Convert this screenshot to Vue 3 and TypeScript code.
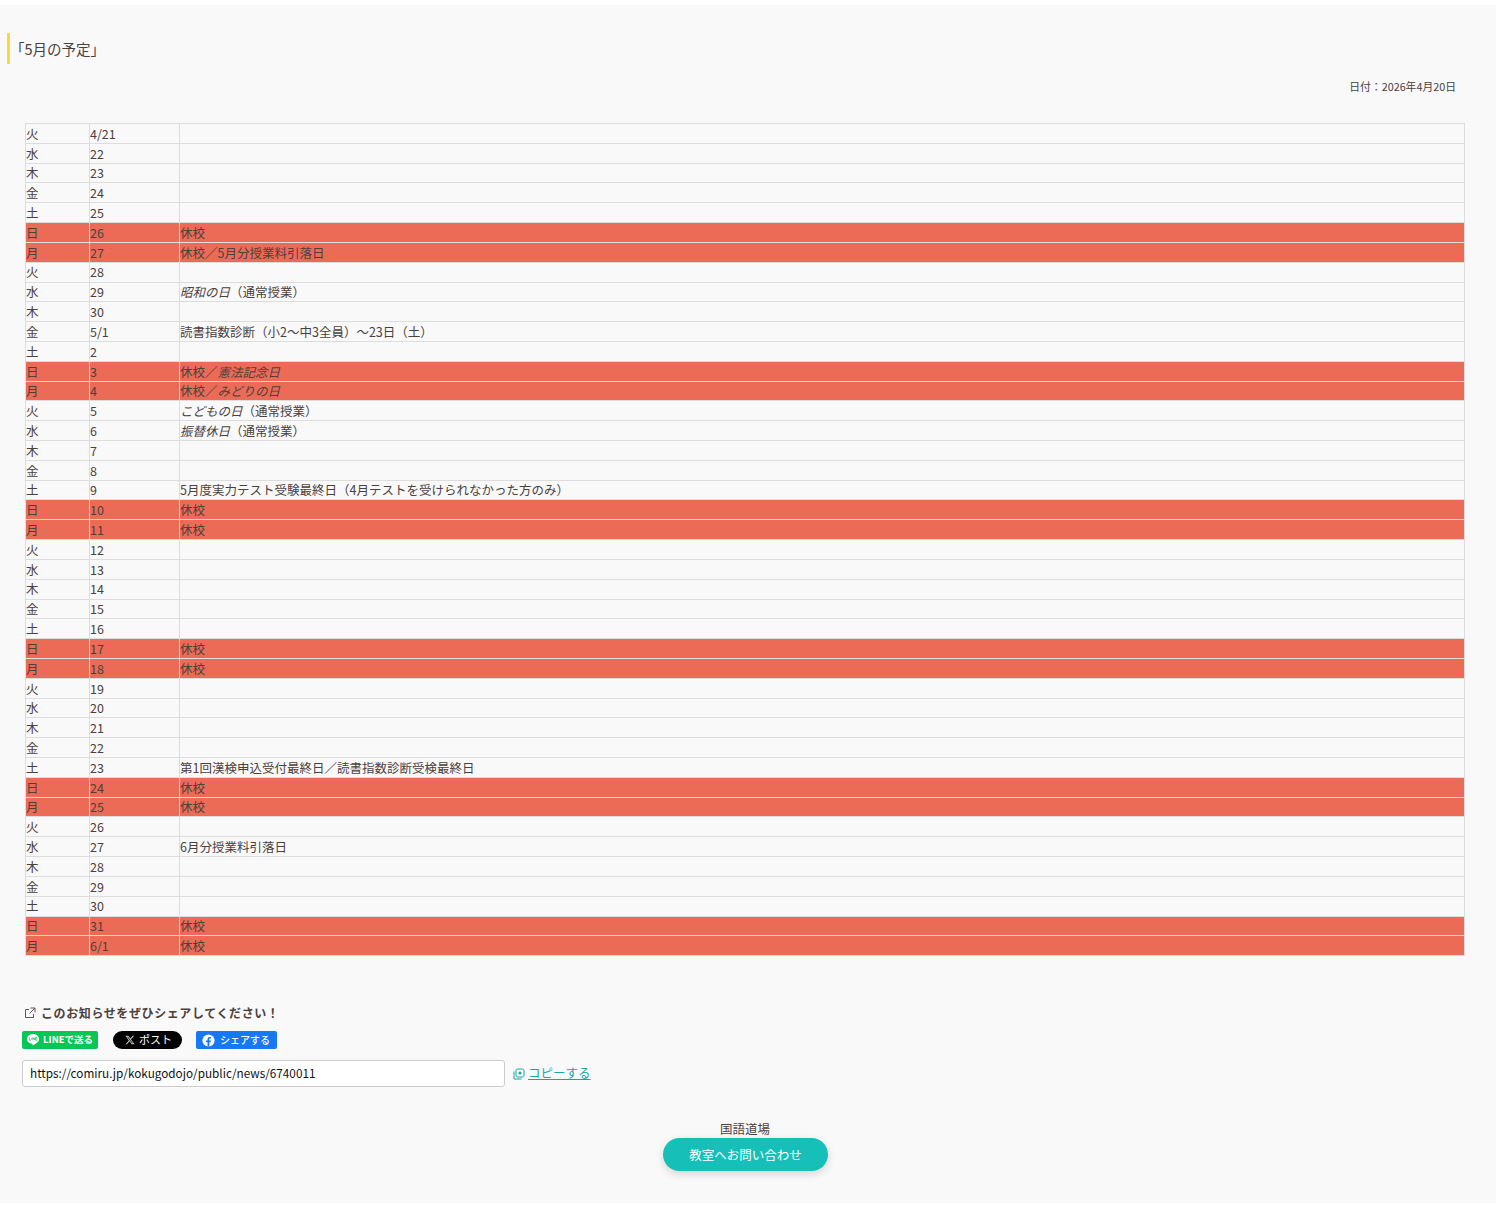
<script setup lang="ts">
interface Row { d: string; n: string; note?: string; em?: string; rest?: string; off?: boolean }
const rows: Row[] = [
  { d: '火', n: '4/21' }, { d: '水', n: '22' }, { d: '木', n: '23' }, { d: '金', n: '24' }, { d: '土', n: '25' },
  { d: '日', n: '26', note: '休校', off: true }, { d: '月', n: '27', note: '休校／5月分授業料引落日', off: true },
  { d: '火', n: '28' }, { d: '水', n: '29', em: '昭和の日', rest: '（通常授業）' }, { d: '木', n: '30' },
  { d: '金', n: '5/1', note: '読書指数診断（小2～中3全員）～23日（土）' }, { d: '土', n: '2' },
  { d: '日', n: '3', note: '休校／', em: '憲法記念日', off: true }, { d: '月', n: '4', note: '休校／', em: 'みどりの日', off: true },
  { d: '火', n: '5', em: 'こどもの日', rest: '（通常授業）' }, { d: '水', n: '6', em: '振替休日', rest: '（通常授業）' },
  { d: '木', n: '7' }, { d: '金', n: '8' }, { d: '土', n: '9', note: '5月度実力テスト受験最終日（4月テストを受けられなかった方のみ）' },
  { d: '日', n: '10', note: '休校', off: true }, { d: '月', n: '11', note: '休校', off: true },
  { d: '火', n: '12' }, { d: '水', n: '13' }, { d: '木', n: '14' }, { d: '金', n: '15' }, { d: '土', n: '16' },
  { d: '日', n: '17', note: '休校', off: true }, { d: '月', n: '18', note: '休校', off: true },
  { d: '火', n: '19' }, { d: '水', n: '20' }, { d: '木', n: '21' }, { d: '金', n: '22' },
  { d: '土', n: '23', note: '第1回漢検申込受付最終日／読書指数診断受検最終日' },
  { d: '日', n: '24', note: '休校', off: true }, { d: '月', n: '25', note: '休校', off: true },
  { d: '火', n: '26' }, { d: '水', n: '27', note: '6月分授業料引落日' }, { d: '木', n: '28' }, { d: '金', n: '29' }, { d: '土', n: '30' },
  { d: '日', n: '31', note: '休校', off: true }, { d: '月', n: '6/1', note: '休校', off: true },
]
</script>

<template>
  <div class="page">
    <h2 class="heading">「5月の予定」</h2>
    <p class="date">日付：2026年4月20日</p>
    <div class="table-wrap">
      <table class="schedule">
        <colgroup>
          <col class="c1" />
          <col class="c2" />
          <col />
        </colgroup>
        <tbody>
          <tr v-for="(r, i) in rows" :key="i" :class="{ off: r.off }">
            <td>{{ r.d }}</td>
            <td>{{ r.n }}</td>
            <td>{{ r.note }}<em v-if="r.em">{{ r.em }}</em>{{ r.rest }}</td>
          </tr>
        </tbody>
      </table>
    </div>

    <section class="share">
      <div class="share-title">
        <svg class="ext" width="12" height="12" viewBox="0 0 12 12" fill="none" stroke="#5f5450" stroke-width="1">
          <path d="M5 2.500H1.500v8h8V7" />
          <path d="M6.500 1h4.500v4.500M11 1 5.500 6.500" />
        </svg>
        <span>このお知らせをぜひシェアしてください！</span>
      </div>
      <div class="buttons">
        <a class="btn line">
          <svg width="14" height="14" viewBox="0 0 14 14">
            <path d="M7 1C3.700 1 1 3.200 1 5.900c0 2.400 2.100 4.400 5 4.800.2 0 .5.1.5.3 0 .2 0 .5-.1.8 0 .2-.1.8.7.4.8-.3 4-2.300 5.400-4C13.200 7.100 13 6.500 13 5.900 13 3.200 10.300 1 7 1z" fill="#fff" />
            <path d="M3.500 4.500v2.700h1.500M5.800 4.500v2.700M7 7.200V4.500l1.800 2.700V4.500M11 4.500H9.700v2.700H11M9.700 5.850H11" fill="none" stroke="#06c755" stroke-width=".7" />
          </svg>
          <span>LINEで送る</span>
        </a>
        <a class="btn x">
          <svg width="10" height="10" viewBox="0 0 24 24" fill="#c8c8c8">
            <path d="M18.200 2h3.400l-7.400 8.500L23 22h-6.800l-5.300-7-6.100 7H1.300l7.900-9.100L1 2h7l4.800 6.400zm-1.200 18h1.900L7 3.900H5z" />
          </svg>
          <span>ポスト</span>
        </a>
        <a class="btn fb">
          <svg width="13" height="13" viewBox="0 0 16 16">
            <circle cx="8" cy="8" r="7.500" fill="#fff" />
            <path d="M6.800 15.500V10H5V8h1.800V6.500C6.800 4.700 7.900 3.700 9.500 3.700c.8 0 1.500.1 1.500.1v1.800h-.9c-.9 0-1.100.5-1.100 1.100V8h2l-.3 2H9v5.500z" fill="#1877f2" />
          </svg>
          <span>シェアする</span>
        </a>
      </div>
      <div class="copy-row">
        <input class="url" type="text" readonly value="https://comiru.jp/kokugodojo/public/news/6740011" />
        <svg class="copy-icon" width="12" height="12" viewBox="0 0 12 12" fill="none" stroke="#14a8a0" stroke-width="1">
          <rect x="3" y="1" width="8" height="8" rx="1.500" />
          <path d="M1 3.500V11h7.500" />
          <circle cx="7" cy="5" r="1.500" fill="#14a8a0" stroke="none" />
        </svg>
        <a class="copy">コピーする</a>
      </div>
    </section>

    <footer class="foot">
      <div class="school">国語道場</div>
      <a class="contact">教室へお問い合わせ</a>
    </footer>
  </div>
</template>

<style>
html, body { margin: 0; background: #fff; }
</style>

<style scoped>
.page {
  margin-top: 5px;
  height: 1198px;
  background: #f9f9f9;
  color: #4c403c;
  font-family: "Noto Sans CJK JP", "Noto Sans", sans-serif;
  font-size: 12.500px;
  overflow: hidden;
  box-sizing: border-box;
  padding-top: 28px;
}
.heading {
  margin: 0 0 0 7px;
  height: 31px;
  box-sizing: border-box;
  border-left: 3px solid #fbd83e;
  padding-left: 0;
  font-size: 14.500px;
  font-weight: 400;
  line-height: 31px;
}
.date {
  margin: 14px 40px 0 0;
  text-align: right;
  font-size: 10.800px;
  line-height: 16px;
}
.table-wrap { padding: 29px 31px 0 25px; }
.schedule {
  width: 100%;
  table-layout: fixed;
  border-collapse: collapse;
  border: 1px solid #ddd;
}
.c1 { width: 64px; }
.c2 { width: 90px; }
.schedule td {
  border: 1px solid #ddd;
  padding: .8px 0 0;
  height: 18.020px;
  line-height: 18.020px;
  font-size: 12.500px;
  white-space: nowrap;
}
.off td { background: #ec6b57; }
.share { padding: 48px 0 0 22px; }
.share-title {
  display: flex;
  align-items: center;
  gap: 5px;
  padding-left: 2px;
  height: 17px;
  font-size: 12px;
  font-weight: 700;
  letter-spacing: 0.600px;
}
.buttons {
  display: flex;
  margin-top: 10px;
  height: 18px;
}
.btn {
  display: flex;
  align-items: center;
  height: 18px;
  color: #fff;
  box-sizing: border-box;
}
.btn span { margin-bottom: 2px; }
.line {
  width: 76px;
  background: #06c755;
  border-radius: 2px;
  padding-left: 4px;
  gap: 3px;
  font-size: 9.500px;
  font-weight: 700;
}
.x {
  margin-left: 15px;
  width: 69px;
  background: #000;
  border-radius: 9px;
  padding-left: 12px;
  gap: 4px;
  font-size: 11px;
}
.fb {
  margin-left: 14px;
  width: 81px;
  background: #1877f2;
  border-radius: 2px;
  padding-left: 6px;
  gap: 5px;
  font-size: 10px;
  font-weight: 500;
}
.copy-row {
  display: flex;
  align-items: center;
  margin-top: 11px;
}
.url {
  width: 483px;
  height: 27px;
  box-sizing: border-box;
  border: 1px solid #ccc;
  border-radius: 3px;
  background: #fff;
  padding: 0 7px 2px;
  color: #111;
  font-family: inherit;
  font-size: 11.750px;
  outline: none;
}
.copy-icon { margin-left: 8px; }
.copy {
  margin-left: 3px;
  margin-bottom: 2px;
  color: #14a8a0;
  text-decoration: underline;
  font-size: 12.500px;
}
.foot {
  display: flex;
  flex-direction: column;
  align-items: center;
  margin-top: 33px;
  padding-right: 5px;
}
.school { margin-right: 1px; line-height: 18px; font-size: 12.500px; color: #4c403c; }
.contact {
  display: block;
  width: 165px;
  height: 33px;
  margin-top: 0;
  border-radius: 17px;
  background: #16c0b8;
  color: #fff;
  text-align: center;
  line-height: 33px;
  font-size: 12.500px;
  box-shadow: 0 3px 8px rgba(0, 0, 0, 0.15);
}
</style>
